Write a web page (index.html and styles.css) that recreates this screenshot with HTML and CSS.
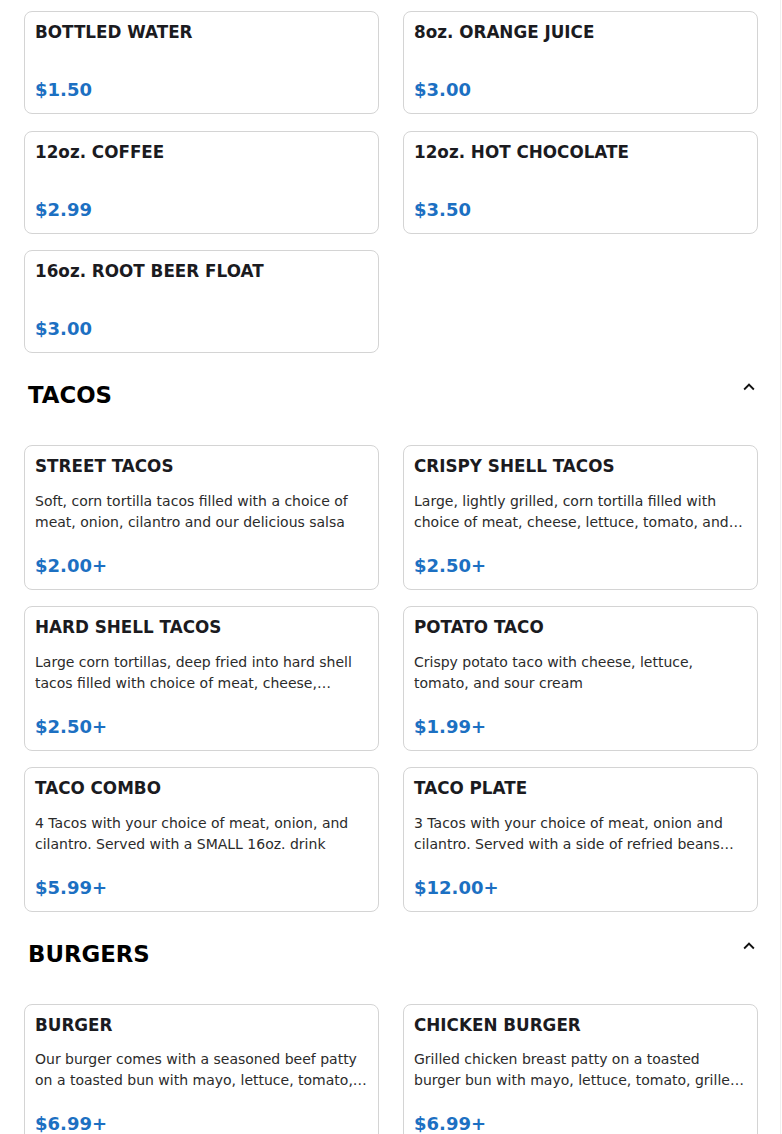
FILE: index.html
```html
<!DOCTYPE html>
<html lang="en">
<head>
<meta charset="utf-8">
<title>Menu</title>
<link rel="stylesheet" href="styles.css">
</head>
<body>
<main class="menu">
  <section class="category">
    <div class="grid">
      <article class="card"><h3 class="item-name">BOTTLED WATER</h3><p class="item-desc"></p><div class="item-price">$1.50</div></article>
      <article class="card"><h3 class="item-name">8oz. ORANGE JUICE</h3><p class="item-desc"></p><div class="item-price">$3.00</div></article>
      <article class="card"><h3 class="item-name">12oz. COFFEE</h3><p class="item-desc"></p><div class="item-price">$2.99</div></article>
      <article class="card"><h3 class="item-name">12oz. HOT CHOCOLATE</h3><p class="item-desc"></p><div class="item-price">$3.50</div></article>
      <article class="card"><h3 class="item-name">16oz. ROOT BEER FLOAT</h3><p class="item-desc"></p><div class="item-price">$3.00</div></article>
    </div>
  </section>

  <section class="category">
    <header class="cat-head">
      <h2 class="cat-title">TACOS</h2>
      <button class="toggle" type="button" aria-label="Collapse">
        <svg viewBox="0 0 24 24" width="22" height="22"><path d="M12 8l-6 6 1.41 1.41L12 10.83l4.59 4.58L18 14z" fill="#111"/></svg>
      </button>
    </header>
    <div class="grid">
      <article class="card"><h3 class="item-name">STREET TACOS</h3><p class="item-desc">Soft, corn tortilla tacos filled with a choice of meat, onion, cilantro and our delicious salsa</p><div class="item-price">$2.00+</div></article>
      <article class="card"><h3 class="item-name">CRISPY SHELL TACOS</h3><p class="item-desc">Large, lightly grilled, corn tortilla filled with choice of meat, cheese, lettuce, tomato, and sour cream</p><div class="item-price">$2.50+</div></article>
      <article class="card"><h3 class="item-name">HARD SHELL TACOS</h3><p class="item-desc">Large corn tortillas, deep fried into hard shell tacos filled with choice of meat, cheese, lettuce and tomato</p><div class="item-price">$2.50+</div></article>
      <article class="card"><h3 class="item-name">POTATO TACO</h3><p class="item-desc">Crispy potato taco with cheese, lettuce, tomato, and sour cream</p><div class="item-price">$1.99+</div></article>
      <article class="card"><h3 class="item-name">TACO COMBO</h3><p class="item-desc">4 Tacos with your choice of meat, onion, and cilantro. Served with a SMALL 16oz. drink</p><div class="item-price">$5.99+</div></article>
      <article class="card"><h3 class="item-name">TACO PLATE</h3><p class="item-desc">3 Tacos with your choice of meat, onion and cilantro. Served with a side of refried beans and rice</p><div class="item-price">$12.00+</div></article>
    </div>
  </section>

  <section class="category">
    <header class="cat-head">
      <h2 class="cat-title">BURGERS</h2>
      <button class="toggle" type="button" aria-label="Collapse">
        <svg viewBox="0 0 24 24" width="22" height="22"><path d="M12 8l-6 6 1.41 1.41L12 10.83l4.59 4.58L18 14z" fill="#111"/></svg>
      </button>
    </header>
    <div class="grid">
      <article class="card"><h3 class="item-name">BURGER</h3><p class="item-desc">Our burger comes with a seasoned beef patty on a toasted bun with mayo, lettuce, tomato, onion and cheese</p><div class="item-price">$6.99+</div></article>
      <article class="card"><h3 class="item-name">CHICKEN BURGER</h3><p class="item-desc">Grilled chicken breast patty on a toasted burger bun with mayo, lettuce, tomato, grilled onion and cheese</p><div class="item-price">$6.99+</div></article>
    </div>
  </section>
</main>
</body>
</html>
```

FILE: styles.css
```css
* { box-sizing: border-box; }

html, body {
  margin: 0;
  padding: 0;
  background: #ffffff;
}

body {
  font-family: "DejaVu Sans", "Noto Sans", sans-serif;
  color: #1b1b1f;
  overflow: hidden;
}

.menu {
  width: 782px;
  padding: 11px 24px 40px 24px;
  min-height: 1134px;
  background: linear-gradient(#f0f0f0, #f0f0f0) no-repeat right 1px top / 1px 100%;
}

.grid {
  display: grid;
  grid-template-columns: 1fr 1fr;
  column-gap: 24px;
  row-gap: 16.5px;
}

.card {
  border: 1px solid #d4d4d4;
  border-radius: 8px;
  padding: 10px 10px 13px 10px;
  background: #fff;
}

.item-name {
  margin: 0 0 15.5px 0;
  font-size: 16.8px;
  font-weight: 700;
  color: #1b1b1f;
  line-height: 20.5px;
}

.item-desc {
  margin: -1.5px 0 22px 0;
  font-size: 14px;
  line-height: 21px;
  color: #2b2b2b;
  display: -webkit-box;
  -webkit-line-clamp: 2;
  -webkit-box-orient: vertical;
  overflow: hidden;
}

.item-desc:empty {
  display: block;
  height: 0;
  margin-top: -1px;
}

.item-price {
  font-size: 18px;
  font-weight: 700;
  color: #1c70c2;
  line-height: 21px;
}

.cat-head {
  display: flex;
  justify-content: space-between;
  align-items: flex-start;
  padding: 26px 0 0 4px;
  height: 92px;
}

.cat-title {
  margin: 0;
  font-size: 22.8px;
  font-weight: 700;
  color: #000;
  line-height: 32px;
}

.toggle {
  border: 0;
  background: transparent;
  padding: 0;
  margin: -1px 0 0 0;
  width: 18px;
  height: 18px;
  display: flex;
  align-items: center;
  justify-content: center;
  cursor: pointer;
}

.toggle svg { flex: none; }
```
